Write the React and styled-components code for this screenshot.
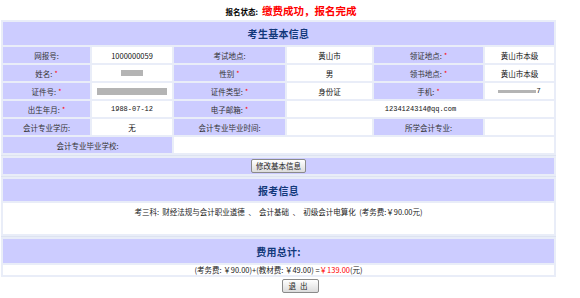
import React from "react";
import styled, { createGlobalStyle } from "styled-components";

const GlobalStyle = createGlobalStyle`
    body {
        margin: 0;
        background: #fff;
        font-family: "Noto Sans CJK SC", "Liberation Sans", sans-serif;
        color: #222;
    }
`;

const Page = styled.div`
    width: 580px;
`;

const Status = styled.div`
    height: 20px;
    display: flex;
    align-items: center;
    justify-content: center;
    gap: 4px;
    padding-left: 2px;
    font-weight: bold;
`;

const StatusLabel = styled.span`
    font-size: 7.5px;
    color: #000;
    margin-top: 3px;
`;

const StatusText = styled.span`
    font-size: 10.5px;
    color: #f00;
`;

const Section = styled.div`
    width: 551px;
    margin-left: 1px;
    padding: 2px;
    background: #e9edf8;
    border-top: ${(p) => (p.$split ? "1px solid #dde3f1" : "none")};
    display: grid;
    grid-template-columns: 87px 80px 111px 85px 109px 69px;
    grid-auto-rows: auto;
    gap: 2px;
`;

const Head = styled.div`
    grid-column: 1 / -1;
    height: ${(p) => p.$h}px;
    background: #ccccff;
    display: flex;
    align-items: center;
    justify-content: center;
    font-size: 10px;
    font-weight: bold;
    color: #12387a;
    letter-spacing: 0.3px;
`;

const Cell = styled.div`
    grid-column: span ${(p) => p.$span || 1};
    height: 16px;
    background: ${(p) => (p.$label ? "#ccccff" : "#fff")};
    display: flex;
    align-items: center;
    justify-content: center;
    font-size: 7.5px;
    color: ${(p) => (p.$label ? "#333" : "#111")};
    white-space: nowrap;
`;

const Mono = styled.span`
    font-family: "Liberation Mono", monospace;
    font-size: 7px;
`;

const Star = styled.span`
    color: #f00;
    font-size: 7px;
    margin-left: 2px;
`;

const Blur = styled.span`
    display: inline-block;
    width: ${(p) => p.$w}px;
    height: ${(p) => p.$h}px;
    background: #b4b4b4;
    filter: blur(0.4px);
`;

const ButtonRow = styled.div`
    grid-column: 1 / -1;
    height: 16px;
    background: #ccccff;
    display: flex;
    align-items: center;
    justify-content: center;
`;

const Button = styled.button`
    height: 14px;
    padding: 0 ${(p) => p.$pad || 4}px;
    border: 1px solid #8a8a8a;
    border-radius: 2px;
    background: linear-gradient(#ffffff, #dcdcdc);
    font-family: "Noto Sans CJK SC", sans-serif;
    font-size: 7.5px;
    line-height: 12px;
    color: #222;
    letter-spacing: ${(p) => p.$spacing || 0}px;
`;

const Body = styled.div`
    grid-column: 1 / -1;
    height: ${(p) => p.$h}px;
    background: #fff;
    display: flex;
    justify-content: center;
    align-items: ${(p) => (p.$top ? "flex-start" : "center")};
    padding-top: ${(p) => (p.$top ? 4 : 0)}px;
    box-sizing: border-box;
    font-size: 7.5px;
    line-height: 10px;
    color: #222;
    white-space: pre;
`;

const Red = styled.span`
    color: #f00;
`;

const Footer = styled.div`
    width: 555px;
    margin-left: 1px;
    padding: 2px 0 0 43px;
    box-sizing: border-box;
    display: flex;
    justify-content: center;
`;

export default function App() {
    return (
        <Page>
            <GlobalStyle />
            <Status>
                <StatusLabel>报名状态:</StatusLabel>
                <StatusText>缴费成功，报名完成</StatusText>
            </Status>

            <Section>
                <Head $h={23}>考生基本信息</Head>

                <Cell $label>网报号:</Cell>
                <Cell>1000000059</Cell>
                <Cell $label>考试地点:</Cell>
                <Cell>黄山市</Cell>
                <Cell $label>
                    领证地点:<Star>*</Star>
                </Cell>
                <Cell>黄山市本级</Cell>

                <Cell $label>
                    姓名:<Star>*</Star>
                </Cell>
                <Cell>
                    <Blur $w={22} $h={6} />
                </Cell>
                <Cell $label>
                    性别<Star>*</Star>
                </Cell>
                <Cell>男</Cell>
                <Cell $label>
                    领书地点:<Star>*</Star>
                </Cell>
                <Cell>黄山市本级</Cell>

                <Cell $label>
                    证件号:<Star>*</Star>
                </Cell>
                <Cell>
                    <Blur $w={70} $h={7} />
                </Cell>
                <Cell $label>
                    证件类型:<Star>*</Star>
                </Cell>
                <Cell>身份证</Cell>
                <Cell $label>
                    手机:<Star>*</Star>
                </Cell>
                <Cell>
                    <Blur $w={38} $h={3} />
                    <Mono>7</Mono>
                </Cell>

                <Cell $label>
                    出生年月:<Star>*</Star>
                </Cell>
                <Cell>
                    <Mono>1988-07-12</Mono>
                </Cell>
                <Cell $label>
                    电子邮箱:<Star>*</Star>
                </Cell>
                <Cell $span={3}>
                    <Mono>1234124314@qq.com</Mono>
                </Cell>

                <Cell $label>会计专业学历:</Cell>
                <Cell>无</Cell>
                <Cell $label>会计专业毕业时间:</Cell>
                <Cell />
                <Cell $label>所学会计专业:</Cell>
                <Cell />

                <Cell $label $span={2}>
                    会计专业毕业学校:
                </Cell>
                <Cell $span={4} />
            </Section>

            <Section $split>
                <ButtonRow>
                    <Button>修改基本信息</Button>
                </ButtonRow>
            </Section>

            <Section $split>
                <Head $h={22}>报考信息</Head>
                <Body $h={31} $top>
                    考三科:  财经法规与会计职业道德  、  会计基础  、  初级会计电算化  (考务费:￥90.00元)
                </Body>
            </Section>

            <Section $split>
                <Head $h={24}>费用总计:</Head>
                <Body $h={10}>
                    (考务费: ￥90.00)+(教材费: ￥49.00) =<Red>￥139.00</Red>(元)
                </Body>
            </Section>

            <Footer>
                <Button $pad={6} $spacing={4}>
                    退出
                </Button>
            </Footer>
        </Page>
    );
}
